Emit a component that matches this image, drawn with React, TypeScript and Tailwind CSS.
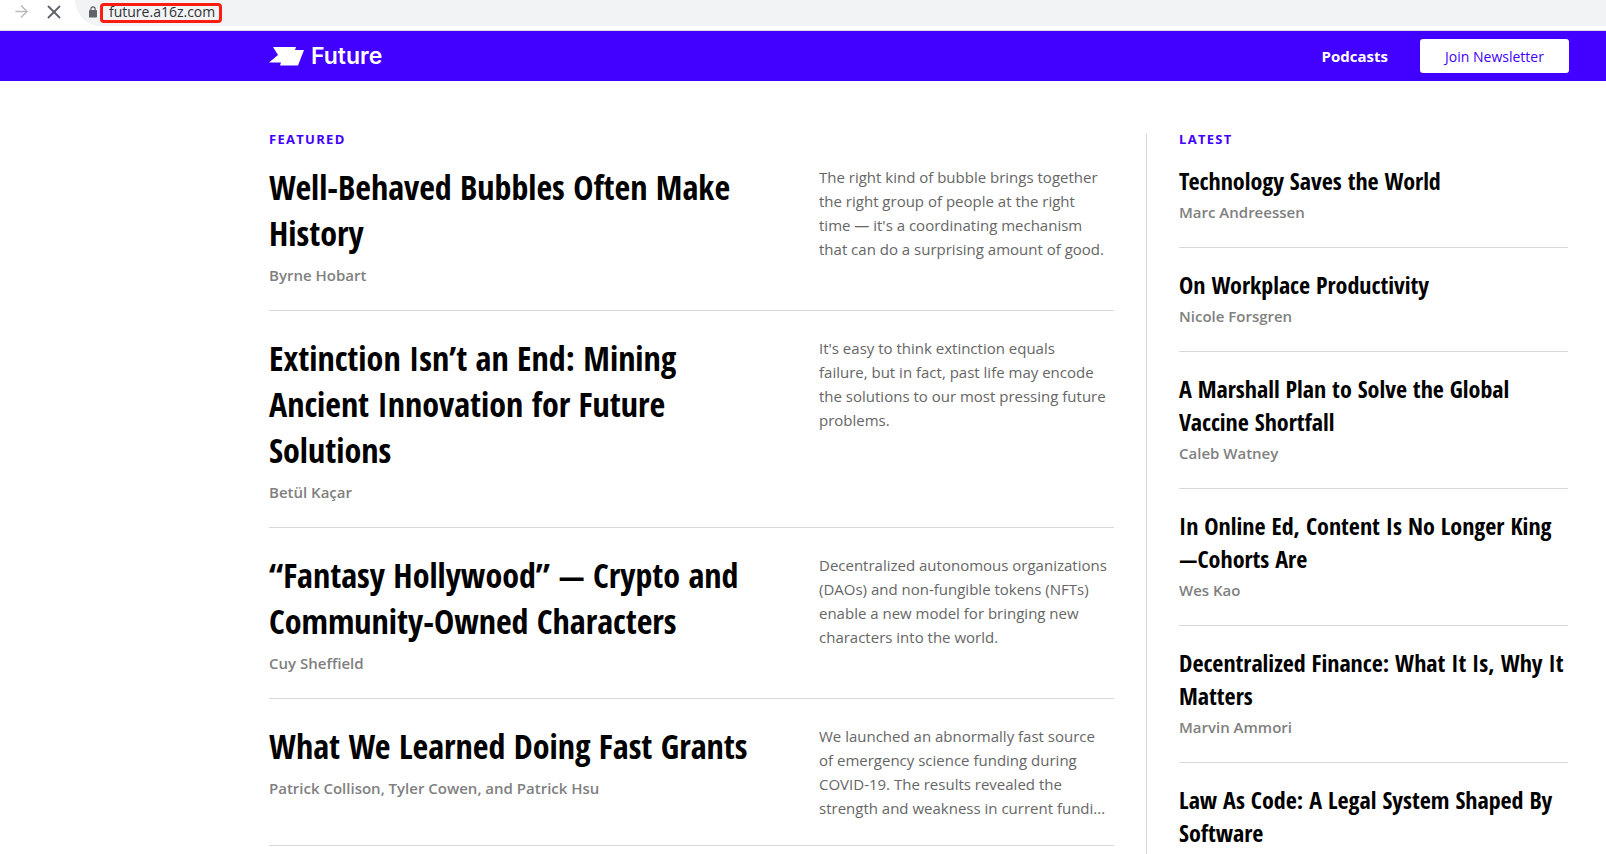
import { ArrowRight, X } from "lucide-react";

const featured = [
  {
    title: "Well-Behaved Bubbles Often Make\nHistory",
    author: "Byrne Hobart",
    excerpt:
      "The right kind of bubble brings together\nthe right group of people at the right\ntime — it's a coordinating mechanism\nthat can do a surprising amount of good.",
  },
  {
    title: "Extinction Isn’t an End: Mining\nAncient Innovation for Future\nSolutions",
    author: "Betül Kaçar",
    excerpt:
      "It's easy to think extinction equals\nfailure, but in fact, past life may encode\nthe solutions to our most pressing future\nproblems.",
  },
  {
    title: "“Fantasy Hollywood” — Crypto and\nCommunity-Owned Characters",
    author: "Cuy Sheffield",
    excerpt:
      "Decentralized autonomous organizations\n(DAOs) and non-fungible tokens (NFTs)\nenable a new model for bringing new\ncharacters into the world.",
  },
  {
    title: "What We Learned Doing Fast Grants",
    author: "Patrick Collison, Tyler Cowen, and Patrick Hsu",
    excerpt:
      "We launched an abnormally fast source\nof emergency science funding during\nCOVID-19. The results revealed the\nstrength and weakness in current fundi...",
  },
];

const latest = [
  { title: "Technology Saves the World", author: "Marc Andreessen" },
  { title: "On Workplace Productivity", author: "Nicole Forsgren" },
  { title: "A Marshall Plan to Solve the Global\nVaccine Shortfall", author: "Caleb Watney" },
  { title: "In Online Ed, Content Is No Longer King\n—Cohorts Are", author: "Wes Kao" },
  { title: "Decentralized Finance: What It Is, Why It\nMatters", author: "Marvin Ammori" },
  { title: "Law As Code: A Legal System Shaped By\nSoftware", author: "" },
];

function BrowserBar() {
  return (
    <div className="flex h-[31px] items-start border-b border-[#dadce0] bg-white">
      <button aria-label="Forward" className="ml-3 mt-0.5 text-[#babcbe]">
        <ArrowRight size={19} strokeWidth={2} />
      </button>
      <button aria-label="Stop loading" className="ml-3 mt-px text-[#5f6368]">
        <X size={22} strokeWidth={2} />
      </button>
      <div className="ml-2.5 flex h-[26px] flex-1 items-start rounded-bl-full bg-[#f1f3f4] pl-3.5">
        <svg viewBox="0 0 8 12" className="mt-1.5 h-3 w-2">
          <path d="M1.9 5V3a2.1 2.1 0 0 1 4.2 0v2" fill="none" stroke="#5f6368" strokeWidth="1.2" />
          <rect x="0" y="4" width="8" height="7.5" rx="0.8" fill="#5f6368" />
        </svg>
        <div className="ml-[3px] mt-[3px] h-5 w-[122px] rounded-sm border-3 border-[#fb1d12]">
          <input
            aria-label="Address"
            defaultValue="future.a16z.com"
            className="block h-3.5 w-full bg-transparent pl-1.5 pb-1 font-['Open_Sans',sans-serif] text-[14px] leading-3.5 text-[#303236] outline-none"
          />
        </div>
      </div>
    </div>
  );
}

function Header() {
  return (
    <header className="flex h-[50px] items-center justify-between bg-[#4100ff] pl-[269px] pr-[37px] text-white">
      <a href="#home" className="flex items-center gap-[7px]">
        <svg viewBox="0 0 35 19" className="h-[19px] w-[35px]" fill="currentColor">
          <path d="M4 0h23l-1 3h9l-6 15.500H11l1-3H0l9-7.500z" />
        </svg>
        <span className="font-['Inter',sans-serif] text-[23px] font-semibold leading-none">Future</span>
      </a>
      <nav className="flex items-center gap-8">
        <a href="#podcasts" className="text-[15px] font-bold">Podcasts</a>
        <button className="h-[34px] w-[149px] rounded-[3px] bg-white text-[14px] font-medium text-[#4100ff]">
          Join Newsletter
        </button>
      </nav>
    </header>
  );
}

function SectionLabel({ children }: { children: string }) {
  return (
    <h2 className="mb-[19px] text-[13px] font-bold uppercase leading-3 tracking-widest text-[#4100ff]">{children}</h2>
  );
}

export default function App() {
  return (
    <div className="h-screen overflow-hidden bg-white font-['Open_Sans',sans-serif] text-black">
      <BrowserBar />
      <Header />
      <main className="flex pl-[269px] pr-[38px] pt-[52px]">
        <section className="min-w-0 flex-1 pr-8">
          <SectionLabel>Featured</SectionLabel>
          {featured.map((post) => (
            <article
              key={post.title}
              className="flex justify-between border-b border-[#d8d8d8] pb-[23px] pt-6 first-of-type:pt-0"
            >
              <div>
                <h3 className="whitespace-pre font-['Open_Sans_Condensed','Open_Sans',sans-serif] text-[34px] font-bold leading-[46px]">
                  <a href="#post">{post.title}</a>
                </h3>
                <p className="mt-[7px] text-[15px] font-semibold leading-6 text-[#808080]">{post.author}</p>
              </div>
              <p className="w-[295px] shrink-0 whitespace-pre pb-0.5 pt-px text-[15px] leading-6 text-[#666]">
                {post.excerpt}
              </p>
            </article>
          ))}
        </section>
        <aside className="w-[422px] shrink-0 border-l border-[#d8d8d8] pl-8">
          <SectionLabel>Latest</SectionLabel>
          {latest.map((post) => (
            <article key={post.title} className="border-b border-[#d8d8d8] pb-[23px] pt-5 first-of-type:pt-0">
              <h3 className="whitespace-pre font-['Open_Sans_Condensed','Open_Sans',sans-serif] text-[24px] font-bold leading-[33px]">
                <a href="#post">{post.title}</a>
              </h3>
              <p className="mt-[3px] text-[15px] font-semibold leading-6 text-[#808080]">{post.author}</p>
            </article>
          ))}
        </aside>
      </main>
    </div>
  );
}
